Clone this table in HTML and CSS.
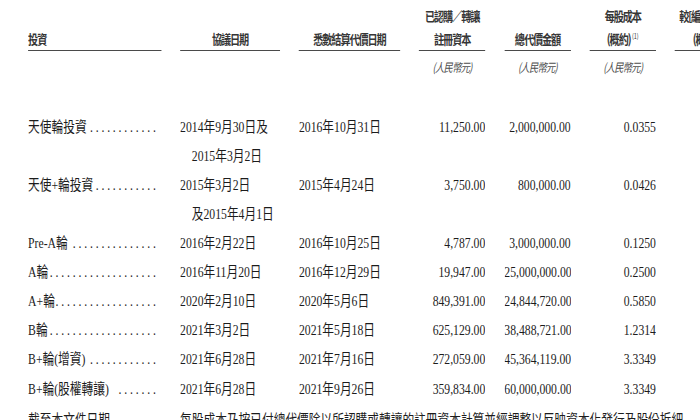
FILE: index.html
```html
<!DOCTYPE html>
<html lang="zh-Hant">
<head>
<meta charset="utf-8">
<title>投資</title>
<link rel="stylesheet" href="styles.css">
</head>
<body>
<div class="page">
  <div class="row head">
    <div class="hc left">投資</div>
    <div class="hc">協議日期</div>
    <div class="hc">悉數結算代價日期</div>
    <div class="hc">已認購／轉讓<br>註冊資本</div>
    <div class="hc">總代價金額</div>
    <div class="hc">每股成本<br>(概約)<sup>(1)</sup></div>
    <div class="hc">較[編纂]折讓<br>(概約)</div>
  </div>
  <div class="row units">
    <div></div><div></div><div></div>
    <div class="u">(人民幣元)</div>
    <div class="u">(人民幣元)</div>
    <div class="u">(人民幣元)</div>
    <div></div>
  </div>
  <div class="body">
    <div class="row">
      <div class="lead"><span>天使輪投資</span><span class="dots">............</span></div>
      <div class="hang">2014年9月30日及<br>2015年3月2日</div>
      <div>2016年10月31日</div>
      <div class="num">11,250.00</div>
      <div class="num">2,000,000.00</div>
      <div class="num">0.0355</div>
      <div></div>
    </div>
    <div class="row">
      <div class="lead"><span>天使+輪投資</span><span class="dots">...........</span></div>
      <div class="hang">2015年3月2日<br>及2015年4月1日</div>
      <div>2015年4月24日</div>
      <div class="num">3,750.00</div>
      <div class="num">800,000.00</div>
      <div class="num">0.0426</div>
      <div></div>
    </div>
    <div class="row">
      <div class="lead"><span>Pre-A輪</span><span class="dots">...............</span></div>
      <div>2016年2月22日</div>
      <div>2016年10月25日</div>
      <div class="num">4,787.00</div>
      <div class="num">3,000,000.00</div>
      <div class="num">0.1250</div>
      <div></div>
    </div>
    <div class="row">
      <div class="lead"><span>A輪</span><span class="dots">...................</span></div>
      <div>2016年11月20日</div>
      <div>2016年12月29日</div>
      <div class="num">19,947.00</div>
      <div class="num">25,000,000.00</div>
      <div class="num">0.2500</div>
      <div></div>
    </div>
    <div class="row">
      <div class="lead"><span>A+輪</span><span class="dots">..................</span></div>
      <div>2020年2月10日</div>
      <div>2020年5月6日</div>
      <div class="num">849,391.00</div>
      <div class="num">24,844,720.00</div>
      <div class="num">0.5850</div>
      <div></div>
    </div>
    <div class="row">
      <div class="lead"><span>B輪</span><span class="dots">...................</span></div>
      <div>2021年3月2日</div>
      <div>2021年5月18日</div>
      <div class="num">625,129.00</div>
      <div class="num">38,488,721.00</div>
      <div class="num">1.2314</div>
      <div></div>
    </div>
    <div class="row">
      <div class="lead"><span>B+輪(增資)</span><span class="dots">............</span></div>
      <div>2021年6月28日</div>
      <div>2021年7月16日</div>
      <div class="num">272,059.00</div>
      <div class="num">45,364,119.00</div>
      <div class="num">3.3349</div>
      <div></div>
    </div>
    <div class="row">
      <div class="lead"><span>B+輪(股權轉讓)</span><span class="dots">.......</span></div>
      <div>2021年6月28日</div>
      <div>2021年9月26日</div>
      <div class="num">359,834.00</div>
      <div class="num">60,000,000.00</div>
      <div class="num">3.3349</div>
      <div></div>
    </div>
    <div class="row last">
      <div>截至本文件日期</div>
      <div class="span">每股成本乃按已付總代價除以所認購或轉讓的註冊資本計算並經調整以反映資本化發行及股份拆細</div>
    </div>
  </div>
</div>
</body>
</html>
```

FILE: styles.css
```css
html, body {
  margin: 0;
  padding: 0;
  overflow: hidden;
  background: #ffffff;
}

body {
  width: 700px;
  height: 420px;
}

.page {
  width: 898px;
  box-sizing: border-box;
  padding-left: 36px;
  transform: scaleX(0.78);
  transform-origin: 0 0;
  color: #1c1c1c;
  font-family: "Liberation Serif", "Noto Sans CJK TC", serif;
  font-size: 15px;
}

.row {
  display: grid;
  grid-template-columns: 170.5px 128px 129.5px 85px 85px 85px 76px;
  column-gap: 24.4px;
}

.head {
  padding-top: 3.5px;
  font-family: "Noto Sans CJK TC", sans-serif;
  font-size: 13px;
  font-weight: 700;
  letter-spacing: -1.4px;
  line-height: 23px;
  color: #363636;
}

.hc {
  align-self: end;
  text-align: center;
  border-bottom: 1px solid #4a4a4a;
  white-space: nowrap;
}

.hc.left {
  text-align: left;
}

.head sup {
  font-size: 7px;
  font-weight: 400;
  line-height: 0;
  vertical-align: 5px;
  letter-spacing: 0;
  margin-left: 2px;
}

.units {
  margin-top: 5px;
  font-family: "Noto Sans CJK TC", sans-serif;
  font-size: 12px;
  font-style: italic;
  letter-spacing: -1px;
  line-height: 22px;
  color: #4d4d4d;
}

.u {
  text-align: center;
}

.body {
  margin-top: 35.2px;
  line-height: 29.1px;
}

.body .row > div {
  white-space: nowrap;
  overflow: hidden;
}

.body .row.last {
  margin-top: 2px;
}

.lead {
  display: flex;
  justify-content: space-between;
  align-items: baseline;
  padding-right: 3px;
}

.dots {
  letter-spacing: 3.6px;
}

.hang {
  padding-left: 1em;
  text-indent: -1em;
}

.num {
  text-align: right;
}

.span {
  grid-column: 2 / span 6;
}
```
